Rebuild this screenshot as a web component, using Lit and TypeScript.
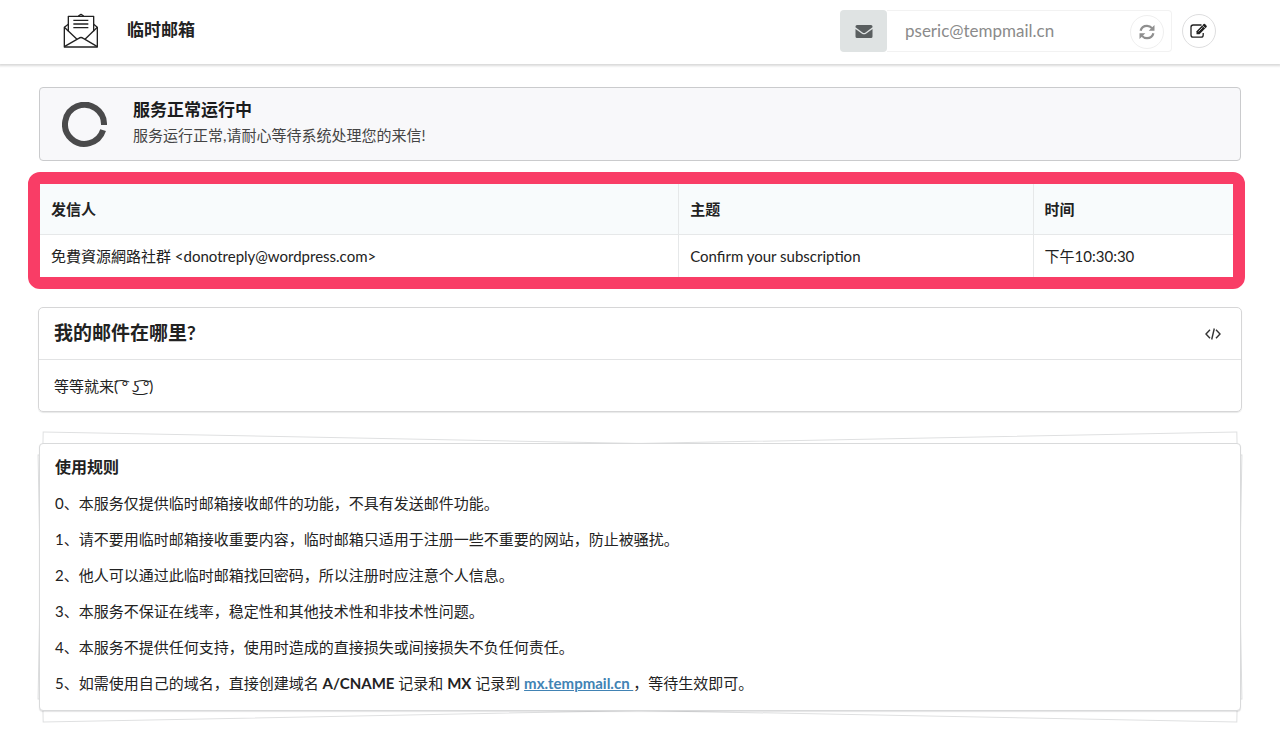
import { LitElement, html, css } from "lit";
import { customElement, state } from "lit/decorators.js";

interface Mail {
  from: string;
  subject: string;
  time: string;
}

@customElement("app-root")
export class AppRoot extends LitElement {
  static styles = css`
    :host {
      display: block;
      font-family: Lato, "Noto Sans CJK SC", "DejaVu Sans", sans-serif;
      font-size: 15px;
      line-height: 20px;
      color: #222;
      background: #fff;
    }
    * {
      box-sizing: border-box;
    }
    h1,
    h2,
    p {
      margin: 0;
    }
    button {
      font: inherit;
      color: inherit;
      background: #fff;
      padding: 0;
      border: 0;
      display: flex;
      align-items: center;
      justify-content: center;
      cursor: pointer;
    }
    svg {
      display: block;
    }
    .bar {
      display: flex;
      align-items: center;
      justify-content: space-between;
      height: 64px;
      padding: 0 64px 2px 63px;
      box-shadow: 0 1px 2px 1px rgba(34, 36, 38, 0.17);
    }
    .brand {
      display: flex;
      align-items: center;
      gap: 29px;
      padding-bottom: 2px;
      font-size: 17px;
      line-height: 24px;
      font-weight: 700;
      color: inherit;
      text-decoration: none;
    }
    .tools {
      display: flex;
      align-items: center;
      gap: 10px;
    }
    .address {
      display: flex;
      width: 332px;
      height: 42px;
    }
    .tag {
      display: flex;
      align-items: center;
      justify-content: center;
      width: 47px;
      border-radius: 4px;
      background: #dfe3e3;
      color: #5a5f60;
    }
    .field {
      display: flex;
      flex: 1;
      align-items: center;
      min-width: 0;
      padding: 2px 7px 0 18px;
      border: 1px solid #f2f2f2;
      border-left: 0;
      border-radius: 0 4px 4px 0;
    }
    .field input {
      flex: 1;
      min-width: 0;
      border: 0;
      padding: 0 0 2px;
      outline: 0;
      background: none;
      font: inherit;
      font-size: 17px;
      line-height: 24px;
      color: #8b8b8b;
    }
    .round {
      width: 34px;
      height: 34px;
      border: 1px solid #dededf;
      border-radius: 50%;
    }
    .round.faint {
      border-color: #efefef;
      color: #8f8f8f;
    }
    main {
      padding: 23px 39px 25px;
    }
    .status {
      display: flex;
      align-items: center;
      gap: 26px;
      height: 74px;
      padding: 0 22px;
      border: 1px solid #cacbcd;
      border-radius: 4px;
      background: #f8f8fa;
    }
    .status h2 {
      font-size: 17px;
      line-height: 26px;
      color: #1b1c1d;
    }
    .status p {
      line-height: 24px;
      color: #444;
    }
    .copy {
      padding-bottom: 4px;
    }
    .inbox {
      margin: 11px -4px 0 -11px;
      border: 12px solid #f93d66;
      border-radius: 12px;
    }
    table {
      width: 100%;
      border-collapse: separate;
      border-spacing: 0;
      table-layout: fixed;
    }
    th,
    td {
      padding: 0 11px;
      text-align: left;
      border-left: 1px solid #e6e8e9;
    }
    th:first-child,
    td:first-child {
      border-left: 0;
    }
    th {
      height: 51px;
      background: #f8fbfc;
      border-bottom: 1px solid #e6e8e9;
    }
    td {
      height: 42px;
    }
    .col-from {
      width: 53.5%;
    }
    .col-time {
      width: 16.8%;
    }
    .card {
      margin: 18px -1px 0;
      border: 1px solid #d6d6d7;
      border-radius: 5px;
      box-shadow: 0 1px 1px rgba(34, 36, 38, 0.1);
    }
    .card-head {
      display: flex;
      align-items: center;
      justify-content: space-between;
      height: 52px;
      padding: 0 20px 0 15px;
      border-bottom: 1px solid #e2e3e4;
    }
    .card-head h2 {
      padding-bottom: 2px;
      font-size: 19px;
      line-height: 28px;
    }
    .card-body {
      padding: 16px 15px 15px;
    }
    .piled {
      position: relative;
      z-index: 0;
      margin-top: 31px;
    }
    .piled::before,
    .piled::after {
      content: "";
      position: absolute;
      inset: 0 1px;
      z-index: -1;
      border: 1px solid #dfe0e1;
      background: #fff;
      transform: rotate(1.1deg);
    }
    .piled::after {
      transform: rotate(-1.1deg);
    }
    .sheet {
      padding: 11px 15px 15px;
      border: 1px solid #d9dadb;
      border-radius: 4px;
      background: #fff;
      box-shadow: 0 1px 1px rgba(34, 36, 38, 0.12);
    }
    .sheet h2 {
      font-size: 16px;
      line-height: 24px;
    }
    .sheet p {
      margin-top: 12px;
      line-height: 24px;
    }
    .sheet a {
      color: #4183b4;
      font-weight: 700;
    }
  `;

  @state() private address = "pseric@tempmail.cn";

  @state() private mails: Mail[] = [
    {
      from: "免費資源網路社群 <donotreply@wordpress.com>",
      subject: "Confirm your subscription",
      time: "下午10:30:30",
    },
  ];

  private rules = [
    "0、本服务仅提供临时邮箱接收邮件的功能，不具有发送邮件功能。",
    "1、请不要用临时邮箱接收重要内容，临时邮箱只适用于注册一些不重要的网站，防止被骚扰。",
    "2、他人可以通过此临时邮箱找回密码，所以注册时应注意个人信息。",
    "3、本服务不保证在线率，稳定性和其他技术性和非技术性问题。",
    "4、本服务不提供任何支持，使用时造成的直接损失或间接损失不负任何责任。",
  ];

  render() {
    return html`
      <header class="bar">
        <a class="brand" href="#">
          <svg width="35" height="35" viewBox="0 0 105 105" fill="none" stroke="#222" stroke-width="4" stroke-linejoin="round" aria-hidden="true">
            <path d="M16 55V10H92V55" />
            <path d="M46 9L54 4L62 9" />
            <path d="M31 22H76M31 33H76M31 44H76" />
            <path d="M16 34L4 43V102H103V43L92 34" />
            <path d="M4 43L42 79M103 43L66 79" />
            <path d="M4 101L47 76Q54 71 61 76L103 101" />
          </svg>
          <span>临时邮箱</span>
        </a>
        <div class="tools">
          <div class="address">
            <label class="tag" for="mail" aria-label="邮箱">
              <svg width="18" height="15" viewBox="0 0 18 15" fill="currentColor" aria-hidden="true">
                <path d="M2 1H16Q17.500 1 17.500 2.600V3.300L10.500 8.400Q9 9.400 7.500 8.400L.5 3.300V2.600Q.5 1 2 1Z" />
                <path d="M.5 5L7 9.700Q9 11 11 9.700L17.500 5V12.500Q17.500 14 16 14H2Q.5 14 .5 12.500Z" />
              </svg>
            </label>
            <div class="field">
              <input id="mail" type="text" readonly .value=${this.address} />
              <button class="round faint" aria-label="刷新">
                <svg width="16" height="16" viewBox="0 0 512 512" fill="none" stroke="currentColor" stroke-width="72" aria-hidden="true">
                  <path d="M52 216C74 122 156 58 256 58C320 58 376 84 416 132" />
                  <path d="M460 296C438 390 356 454 256 454C192 454 136 428 96 380" />
                  <path d="M496 30V216H310Z M16 482V296H202Z" fill="currentColor" stroke="none" />
                </svg>
              </button>
            </div>
          </div>
          <button class="round" aria-label="编辑">
            <svg width="18" height="16" viewBox="0 0 18 16" fill="none" stroke="#222" stroke-width="1.300" aria-hidden="true">
              <path d="M11.500 2H3.200Q1 2 1 4.200V12Q1 14.200 3.200 14.200H11Q13.200 14.200 13.200 12V10" />
              <path d="M6.500 8.200L13.600 1.100Q14.300 .5 15 1.100L16.600 2.700Q17.200 3.400 16.600 4.100L9.500 11.200H6.500Z" fill="#222" stroke="none" />
              <path d="M12.300 2.400L15.300 5.400M8.500 8.500L12.500 4.500" stroke="#fff" stroke-width=".7" />
            </svg>
          </button>
        </div>
      </header>
      <main>
        <section class="status">
          <svg width="45" height="45" viewBox="0 0 45 45" fill="none" stroke="#4a4a4b" stroke-width="6" aria-hidden="true">
            <path d="M42 23A19.500 19.500 0 1 0 41.100 28.200" />
          </svg>
          <div class="copy">
            <h2>服务正常运行中</h2>
            <p>服务运行正常,请耐心等待系统处理您的来信!</p>
          </div>
        </section>

        <div class="inbox">
          <table>
            <thead>
              <tr>
                <th class="col-from">发信人</th>
                <th>主题</th>
                <th class="col-time">时间</th>
              </tr>
            </thead>
            <tbody>
              ${this.mails.map(
                (m) => html`<tr>
                  <td>${m.from}</td>
                  <td>${m.subject}</td>
                  <td>${m.time}</td>
                </tr>`
              )}
            </tbody>
          </table>
        </div>

        <section class="card">
          <div class="card-head">
            <h2>我的邮件在哪里?</h2>
            <button aria-label="代码">
              <svg width="16" height="12" viewBox="0 0 16 12" fill="none" stroke="#333" stroke-width="1.400" aria-hidden="true">
                <path d="M5 1.800L1 6L5 10.200M11 1.800L15 6L11 10.200M9.300 .5L6.700 11.500" />
              </svg>
            </button>
          </div>
          <div class="card-body">等等就来( ͡° ͜ʖ ͡°)</div>
        </section>

        <section class="piled">
          <div class="sheet">
            <h2>使用规则</h2>
            ${this.rules.map((r) => html`<p>${r}</p>`)}
            <p>5、如需使用自己的域名，直接创建域名 <b>A/CNAME</b> 记录和 <b>MX</b> 记录到 <a href="#">mx.tempmail.cn </a>，等待生效即可。</p>
          </div>
        </section>
      </main>
    `;
  }
}
